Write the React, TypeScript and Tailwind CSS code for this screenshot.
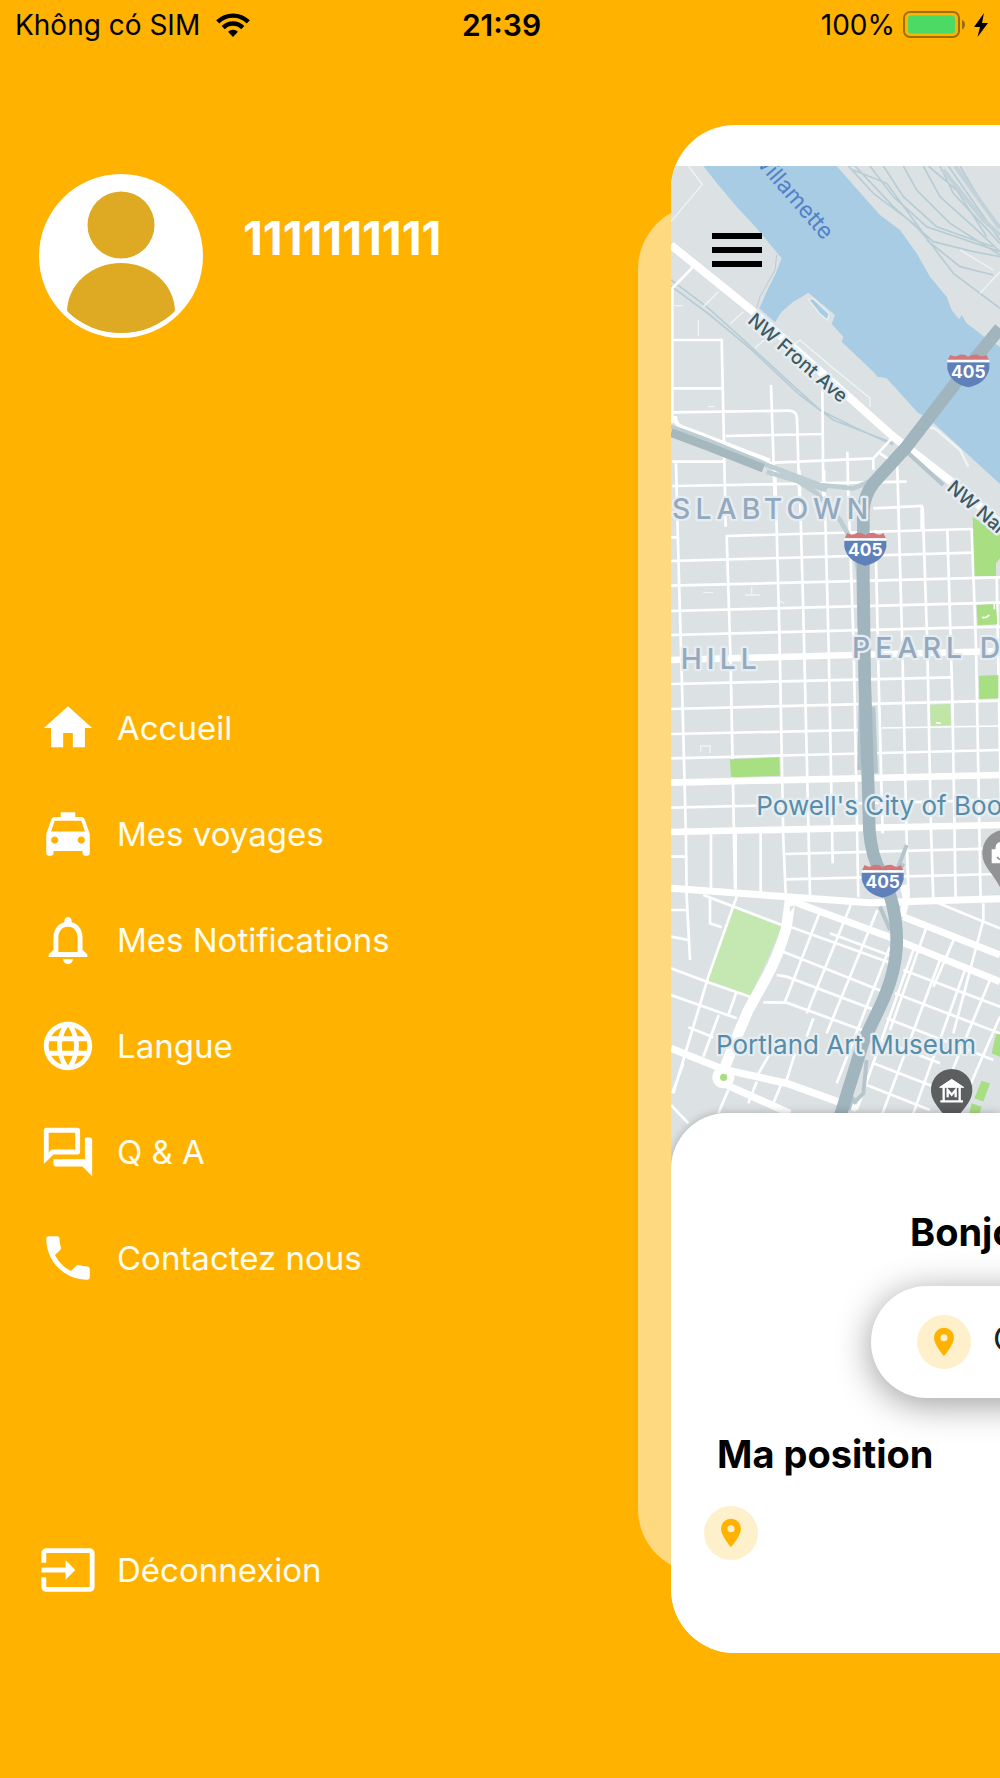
import React from "react";
import type { IconType } from "react-icons";
import {
  MdInput,
  MdLanguage,
  MdLocationOn,
  MdNotificationsNone,
  MdOutlineQuestionAnswer,
} from "react-icons/md";

type IconComponent = IconType | ((props: { className?: string }) => React.ReactElement);

function HomeIcon({ className }: { className?: string }) {
  return (
    <svg viewBox="0 0 24 24" fill="currentColor" className={className} aria-hidden="true">
      <path d="M10 20v-5.900h4V20h5v-8h3L12 3 2 12h3v8z" />
    </svg>
  );
}

function TaxiIcon({ className }: { className?: string }) {
  return (
    <svg viewBox="0 0 24 24" fill="currentColor" className={className} aria-hidden="true">
      <path d="M18.920 6.010C18.720 5.420 18.160 5 17.500 5H15V3H9v2H6.500c-.66 0-1.210.42-1.420 1.010L3 12v8c0 .55.45 1 1 1h1c.55 0 1-.45 1-1v-1h12v1c0 .55.45 1 1 1h1c.55 0 1-.45 1-1v-8l-2.080-5.990zM6.500 16c-.83 0-1.500-.67-1.500-1.500S5.670 13 6.500 13s1.500.67 1.500 1.500S7.330 16 6.500 16zm11 0c-.83 0-1.500-.67-1.500-1.500s.67-1.500 1.500-1.500 1.500.67 1.500 1.500-.67 1.500-1.500 1.500zM5 11l1.500-4.500h11L19 11H5z" />
    </svg>
  );
}

function PhoneIcon({ className }: { className?: string }) {
  return (
    <svg viewBox="0 0 24 24" fill="currentColor" className={className} aria-hidden="true">
      <path d="M6.620 10.790c1.440 2.830 3.760 5.140 6.590 6.590l2.200-2.200c.27-.27.67-.36 1.020-.24 1.120.37 2.330.57 3.570.57.55 0 1 .45 1 1V20c0 .55-.45 1-1 1-9.390 0-17-7.610-17-17 0-.55.45-1 1-1h3.500c.55 0 1 .45 1 1 0 1.250.2 2.450.57 3.570.11.35.03.74-.25 1.020l-2.200 2.200z" />
    </svg>
  );
}

const menu: { label: string; icon: IconComponent }[] = [
  { label: "Accueil", icon: HomeIcon },
  { label: "Mes voyages", icon: TaxiIcon },
  { label: "Mes Notifications", icon: MdNotificationsNone },
  { label: "Langue", icon: MdLanguage },
  { label: "Q & A", icon: MdOutlineQuestionAnswer },
  { label: "Contactez nous", icon: PhoneIcon },
];

function StatusBar() {
  return (
    <header className="grid h-[50px] grid-cols-[1fr_auto_1fr] items-center pr-3 pl-[15px] text-[28px] leading-none text-black">
      <div className="flex items-center gap-4">
        <span>Không có SIM</span>
        <svg viewBox="0 0 34 24" className="h-6 w-[34px]" aria-label="Wi-Fi">
          <path d="M17 24l5-5.2a7.4 7.4 0 0 0-10 0z" />
          <path
            d="M7.200 14.600A13.800 13.800 0 0 1 26.800 14.600M1.700 8.900A21.700 21.700 0 0 1 32.300 8.900"
            fill="none"
            stroke="#000"
            strokeWidth="4.400"
          />
        </svg>
      </div>
      <time className="text-[30px] font-semibold">21:39</time>
      <div className="flex items-center justify-end gap-2">
        <span>100%</span>
        <svg viewBox="0 0 63 28" className="h-7 w-[63px]" aria-label="Batterie">
          <rect x="1" y="1" width="55" height="25" rx="6" fill="none" stroke="#000" strokeOpacity=".38" strokeWidth="2" />
          <rect x="5" y="4.500" width="47" height="18" rx="3" fill="#4cd964" />
          <path d="M59 9c4 1 4 8 0 9.500z" fill="#000" fillOpacity=".4" />
        </svg>
        <svg viewBox="0 0 14 24" className="h-6 w-[14px]" aria-label="En charge">
          <path d="M10 0L0 14h6L3.500 24 14 10H8z" />
        </svg>
      </div>
    </header>
  );
}

function Avatar() {
  return (
    <svg viewBox="0 0 164 164" className="size-[164px] shrink-0" role="img" aria-label="Profil">
      <clipPath id="avatar">
        <circle cx="82" cy="82" r="77" />
      </clipPath>
      <circle cx="82" cy="82" r="82" fill="#fff" />
      <circle cx="82" cy="51" r="33.500" fill="#dfaa23" />
      <ellipse cx="82" cy="138" rx="54" ry="49" fill="#dfaa23" clipPath="url(#avatar)" />
      <path d="M28 138h108v26H28z" fill="#dfaa23" clipPath="url(#avatar)" />
    </svg>
  );
}

function MenuLink({ label, icon: Icon }: { label: string; icon: IconComponent }) {
  return (
    <a href="#" className="flex items-center gap-5 text-[33px] leading-[58px] text-[#fffdf2]">
      <Icon className="size-[58px] shrink-0 text-white" />
      {label}
    </a>
  );
}

function Shield({ x, y }: { x: number; y: number }) {
  return (
    <g transform={`translate(${x} ${y})`}>
      <path d="M-62-32L-54-48Q-40-38-26-48Q-12-50 0-42Q14-50 28-48Q42-38 54-48L62-32z" fill="#d4777b" />
      <path d="M-63-25H63V-6Q54 38 0 50Q-54 38-63-6z" fill="#5f80b8" />
      <path d="M-63-29H63" stroke="#fff" strokeWidth="7" />
      <text y="22" textAnchor="middle" className="fill-white text-[52px] font-bold">405</text>
    </g>
  );
}

function CityMap() {
  return (
    <svg
      viewBox="93 18 987 3000"
      preserveAspectRatio="xMinYMin slice"
      className="block h-[1000px] w-full"
      role="img"
      aria-label="Plan de Portland"
    >
      <rect x="93" y="18" width="6000" height="3000" fill="#dce2e3" />

      {/* River */}
      <path
        d="M190 18L235 75L290 140L350 205L425 295L405 345L385 385L358 445L405 487L425 455L460 425L490 408L505 398L585 465L575 492L610 530L605 545L700 635L712 650L740 655L835 760L860 770L1080 972V560L1030 528L980 490L965 465L957 478L935 450L920 410L870 350L830 280L780 210L720 165L680 120L640 75L590 18z"
        fill="#a8cce4"
      />
      <path d="M505 418L520 416L568 462L562 480L540 462z" fill="#a8cce4" stroke="#e9eeee" strokeWidth="4" />

      {/* Rail yard */}
      <g fill="none" stroke="#b7ccd5" strokeWidth="5">
        <path d="M625 18L700 100L820 190L860 235L940 340L1080 445M645 18L760 140L880 245L1000 275L1080 290M690 18L760 110L860 200L1080 275M730 18L790 110L890 200L1060 260M790 18L830 90L930 190L1080 285M850 18L900 110L1000 200L1080 275M900 18L940 100L1080 250M925 18L1080 240M960 18L1020 120L1080 200M865 18L950 90L1040 230M860 240L960 320L1060 345M640 30L740 70L850 220" />
        <path d="M945 18L1080 205M910 30L1030 180L1080 225" strokeWidth="12" stroke="#c3d2d9" />
        <path d="M93 360L200 440L300 530L430 650L540 750L640 800L760 855M93 378L210 465L330 565L480 705L580 780L760 850" />
        <path d="M410 285L405 330L360 410L350 445" strokeWidth="3" />
      </g>

      {/* Faint lanes */}
      <g fill="none" stroke="#f1f4f4" strokeWidth="4">
        <path d="M145 18L187 73L93 185M235 395L190 440M310 455L270 492M97 437H130M175 480V528M450 560L480 540L580 625L690 715L690 740M372 540L345 565M1080 335L1020 400M960 270L1060 330M205 740H225" />
        <path d="M870 805Q880 800 890 810L960 870L985 920" strokeWidth="7" />
      </g>

      {/* North-west streets */}
      <g fill="none" stroke="#fff" strokeWidth="8">
        <path d="M160 320L97 385V790M97 540H245L250 760L257 1100M97 685H250M97 757L445 752Q470 752 471 775L478 1010M393 675L404 1010M547 690L550 1010M257 828L547 822M97 905H255M350 910L700 895L755 835M622 875L626 1060M97 978L800 965M700 895V930M720 880L765 910Q772 915 772 930L776 1060M700 1045L845 1038V1110" />
        <path d="M105 768Q105 800 140 806L390 902" strokeWidth="12" />
        <path d="M93 255L340 455L760 830L930 962L1080 1090" strokeWidth="24" />
      </g>
      <path d="M800 875L910 975" stroke="#b4c6cc" strokeWidth="13" />

      {/* Pearl District grid */}
      <g transform="translate(0 960)" fill="none" stroke="#fff" strokeWidth="8">
        <path d="M108 -50L117 300L127 650L138 1080L140 1250L150 1440M260 165L272 550L285 1225M405 -40L418 450L430 1080L437 1240M478 -30L490 400L505 1030L510 1250M552 -30L566 500L578 1150M628 120L641 500L655 1250M706 150L716 600L728 1060M775 80L787 500L800 1080L806 1250M848 80L862 500L873 1050L880 1260M922 148L937 650L947 1260M995 145L1008 500L1022 1260M1070 290L1085 1080" />
        <path d="M93 172H112M260 168L995 147M93 243L1000 218M93 317L1080 292M93 393L1080 368M93 465L1080 440M93 612L937 592M93 687L1080 662M93 762L655 750M93 835L1080 810M93 983L1080 960M137 1130H93M437 1122L1080 1105M437 1198L1080 1182" />
        <path d="M725 744L1080 738" strokeWidth="4" />
        <path d="M93 540L1080 513M93 908L1080 885M93 1056L1080 1035" strokeWidth="20" />
        <path d="M190 338H220M315 345H360M335 320V345M418 362L433 370M182 815V798H210V820" strokeWidth="4" stroke="#f1f4f4" />
      </g>

      {/* Parks */}
      <g transform="translate(0 960)" fill="#a8df82">
        <path d="M998 110L1080 165V235L1068 250V288H1004zM1010 375L1068 372L1072 433L1013 436zM1017 587L1075 585V655L1018 657zM270 838L418 832L420 887L273 892z" />
        <path d="M870 675L930 672L933 735L873 738z" fill="#bfe6a4" />
        <path d="M1026 412Q1040 415 1048 405M1063 372V388M888 728L902 730" fill="none" stroke="#fff" strokeWidth="5" />
      </g>

      {/* Downtown grid */}
      <g transform="translate(0 1920)" fill="none" stroke="#fff" strokeWidth="8">
        <path d="M283 320L428 377L332 587L202 540z" fill="#c5e7b1" stroke="none" />
        <path d="M213 100V268M287 98V268M362 98V282M93 330H140M93 410L145 420M210 290V370L245 382M190 285L425 375M290 290L205 530L100 880M93 505L200 545L330 590M93 585L290 655M288 580L265 645M236 645L190 770M145 682L220 712M130 790L97 880M93 915L145 970M265 870L235 940M350 845L325 910M425 850L400 910" />
        <path d="M540 335L435 605M632 315L500 640M712 330L560 700M750 440L590 850M820 450L650 930M900 480L720 960M975 510L820 940M1050 540L900 900M860 380L750 690M945 410L880 560M1030 360L940 700M885 305L1080 385M1030 310V360M1080 650L980 880" />
        <path d="M450 380L755 490M430 455L755 585M410 525L440 530L730 640M370 607L440 608L680 695M790 510L1080 620M765 580L1080 700M740 655L1060 780M720 720L900 790M700 790L960 890M680 855L870 930M520 655L500 710M465 760L440 840M390 760L350 830M570 400L760 470" />
        <path d="M93 265L440 290L690 308L1080 296M440 290L480 312L750 412L1080 545M790 350L1080 465M790 255L800 300L785 350" strokeWidth="21" />
        <path d="M93 745L250 808L440 850L650 925M260 855L450 940" strokeWidth="22" />
        <path d="M450 300L440 380Q415 470 375 540L325 630L295 700L255 800" strokeWidth="32" />
        <circle cx="250" cy="832" r="33" fill="#fff" stroke="none" />
        <circle cx="251" cy="832" r="11" fill="#a8df82" stroke="none" />
        <path d="M1068 703H1080V770L1055 760zM1025 842L1050 850L1030 905L1003 895zM995 910L1025 920L1015 950H985z" fill="#a8df82" stroke="none" />
        <path d="M452 318V330L460 318" stroke="#dce2e3" strokeWidth="5" />
      </g>

      {/* Interstate 405 */}
      <g fill="none" strokeLinejoin="round">
        <path d="M93 800L200 840L380 915L540 975L640 985L700 960M420 930L530 1000L600 1080L640 1150L660 1260M380 935L560 990" stroke="#bdcdd2" strokeWidth="14" />
        <path d="M93 818L200 858L370 925" stroke="#a5b8be" strokeWidth="26" />
        <path d="M654 1200L658 1400M662 1620L658 1830M700 1640L708 1840M678 1990L690 2090L720 2130M728 2125L755 2180L790 2110M800 2055L775 2120M720 2240L750 2310M640 2810L625 2850M680 2700L670 2800L640 2830" stroke="#b4c6cc" strokeWidth="12" />
        <path d="M1080 505L985 620L800 860L700 970Q670 1010 670 1060L670 1250L674 1560L684 1860L688 2010Q694 2090 724 2140Q772 2240 770 2350Q768 2440 720 2540L670 2645L600 2870" stroke="#a0b5bd" strokeWidth="38" />
      </g>

      <Shield x={985} y={632} />
      <Shield x={676} y={1167} />
      <Shield x={728} y={2163} />

      {/* Map pins */}
      <path d="M935 2727a62 62 0 0 1 62 62c0 44-42 68-62 110c-20-42-62-66-62-110a62 62 0 0 1 62-62z" fill="#5d5e60" />
      <g transform="translate(935 1920)" fill="none" stroke="#fff" strokeWidth="7">
        <path d="M-36 862L0 838L36 862z" fill="#fff" strokeWidth="3" />
        <path d="M-24 862V904M24 862V904M-34 904H34" />
        <path d="M-12 892V870L0 884L12 870V892" />
      </g>
      <path d="M1095 2010a68 68 0 0 0-68 72c0 36 34 60 53 100h30V2010z" fill="#929394" />
      <path d="M1055 2110V2068H1066Q1066 2048 1080 2046V2110z" fill="#fff" />
      <path d="M1072 2090Q1074 2097 1080 2098" fill="none" stroke="#929394" strokeWidth="5" />

      {/* Labels */}
      <g className="[paint-order:stroke]" stroke="#e6edf2" strokeWidth="14" strokeLinejoin="round">
        <g className="text-[85px] font-medium tracking-[0.18em]" fill="#94a9bd">
          <text x="96" y="1076">SLABTOWN</text>
          <text x="122" y="1528">HILL</text>
          <text x="636" y="1495">PEARL D</text>
        </g>
        <g className="text-[78px]" fill="#568da8">
          <text x="349" y="1964">Powell's City of Boo</text>
          <text x="228" y="2681">Portland Art Museum</text>
        </g>
        <g className="text-[57px] font-medium" fill="#40595f">
          <text transform="translate(320 486) rotate(41)">NW Front Ave</text>
          <text transform="translate(918 988) rotate(41)">NW Nai</text>
        </g>
      </g>
      <text transform="translate(330 -10) rotate(49)" className="text-[68px]" fill="#5381c9">
        Willamette
      </text>
    </svg>
  );
}

function PinBadge() {
  return (
    <span className="grid size-[54px] shrink-0 place-items-center rounded-full bg-[#fff0cc]">
      <MdLocationOn className="size-[34px] text-[#ffb300]" />
    </span>
  );
}

export default function App() {
  return (
    <div className="flex min-h-screen flex-col overflow-hidden bg-[#ffb300] font-['Inter',sans-serif]">
      <StatusBar />
      <div className="flex grow pt-[75px] pb-[125px]">
        <nav className="flex w-[67.1%] shrink-0 flex-col pt-[49px] pl-[39px]" aria-label="Menu principal">
          <div className="flex items-start gap-10">
            <Avatar />
            <h1 className="pt-[38px] text-[46px] leading-[52px] font-bold text-white">1111111111</h1>
          </div>
          <ul className="mt-[361px] flex flex-col gap-12">
            {menu.map((item) => (
              <li key={item.label}>
                <MenuLink {...item} />
              </li>
            ))}
          </ul>
          <div className="mt-auto pb-[54px]">
            <MenuLink label="Déconnexion" icon={MdInput} />
          </div>
        </nav>

        <div className="relative min-w-0 grow">
          <div className="absolute inset-y-20 right-0 -left-[33px] rounded-l-[64px] bg-[#ffd980]" />
          <main className="relative flex h-full flex-col overflow-hidden rounded-l-[64px] bg-white pt-[41px]">
            <CityMap />
            <button type="button" aria-label="Ouvrir le menu" className="absolute top-[108px] left-[41px] flex flex-col gap-2">
              <span className="h-1.5 w-[50px] bg-black" />
              <span className="h-1.5 w-[50px] bg-black" />
              <span className="h-1.5 w-[50px] bg-black" />
            </button>
            <section className="relative -mt-[53px] flex grow flex-col rounded-tl-[56px] bg-white pt-[96px] pl-[33px] shadow-[0_0_8px_rgba(0,0,0,0.25)]">
              <h2 className="pl-[206px] text-[38px] leading-[46px] font-bold whitespace-nowrap text-black">Bonjour</h2>
              <button
                type="button"
                className="mt-[31px] ml-[167px] flex h-28 w-[520px] items-center gap-[22px] rounded-full bg-white pl-[46px] text-[34px] whitespace-nowrap text-[#222] shadow-[0_6px_36px_rgba(0,0,0,0.4)]"
              >
                <PinBadge />
                <span className="pb-2">Où allez-vous ?</span>
              </button>
              <h2 className="mt-[33px] pl-[13px] text-[38px] leading-[46px] font-bold whitespace-nowrap text-black">Ma position</h2>
              <div className="mt-[29px]">
                <PinBadge />
              </div>
            </section>
          </main>
        </div>
      </div>
    </div>
  );
}
